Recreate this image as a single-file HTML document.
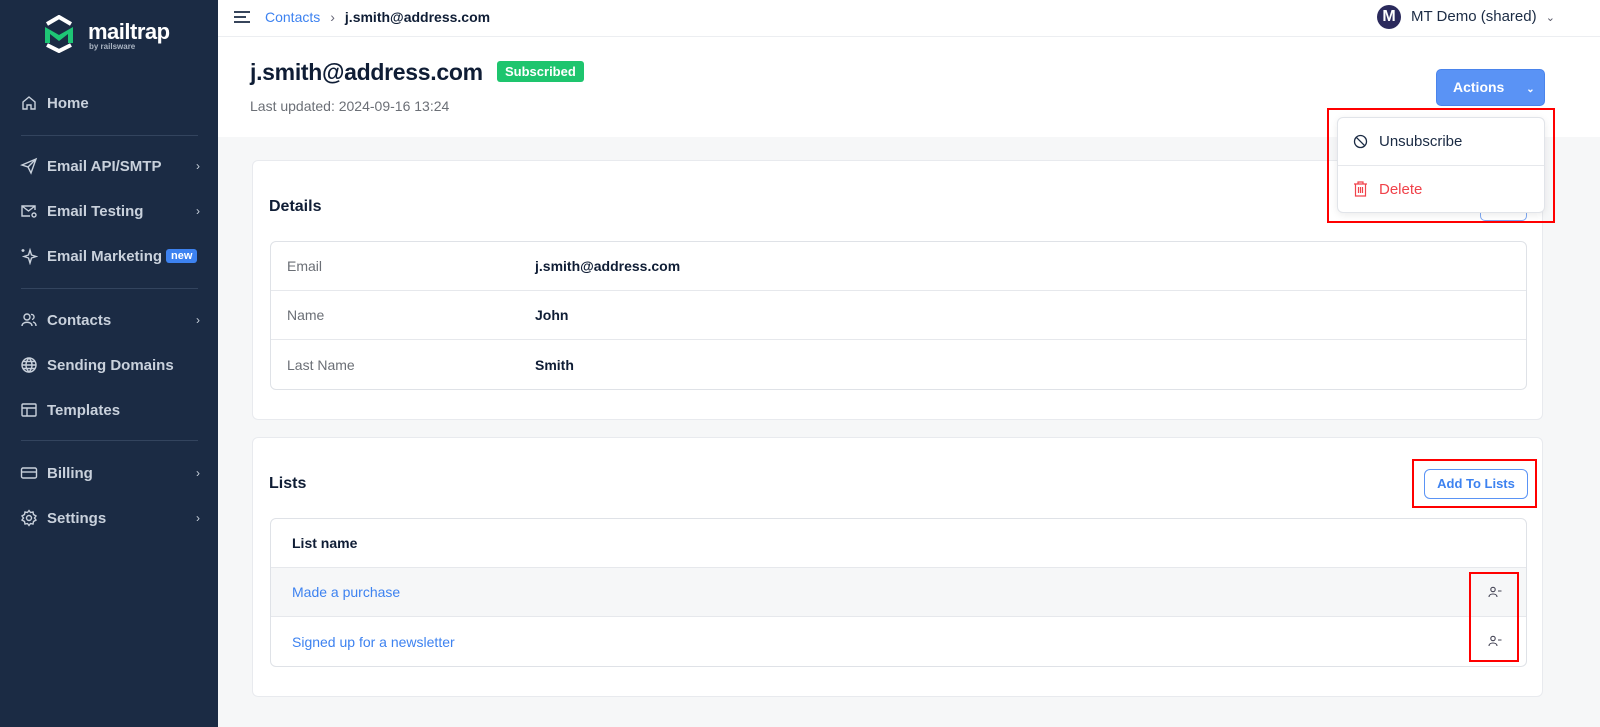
<!DOCTYPE html>
<html><head><meta charset="utf-8"><style>
*{box-sizing:border-box;margin:0;padding:0}
body{width:1600px;height:727px;overflow:hidden;font-family:"Liberation Sans",sans-serif;background:#f6f7f8;position:relative;color:#0f1d35}
.sb{position:absolute;left:0;top:0;width:218px;height:727px;background:#1b2b44}
.nav{position:absolute;left:20px;color:#c9d1dc;font-size:15px;font-weight:bold;display:flex;align-items:center;width:180px}
.nav svg{width:18px;height:18px;margin-right:9px;stroke:#c9d1dc;fill:none;stroke-width:1.4}
.nav .ch{position:absolute;right:0;font-weight:normal;font-size:12px}
.hr{position:absolute;left:21px;width:177px;height:1px;background:#33445e}
.top{position:absolute;left:218px;top:0;right:0;height:37px;background:#fff;border-bottom:1px solid #eceef1}
.head{position:absolute;left:218px;top:37px;right:0;height:100px;background:#fff}
.card{position:absolute;left:252px;width:1291px;background:#fff;border:1px solid #e8eaee;border-radius:6px}
.tbl{position:absolute;left:17px;width:1257px;border:1px solid #dfe2e7;border-radius:6px;overflow:hidden}
.row{height:49px;border-bottom:1px solid #e6e8ec;position:relative;font-size:14px;display:flex;align-items:center}
.row:last-child{border-bottom:none}
.red{position:absolute;border:2px solid #f00}
</style></head><body>
<div class="sb">
 <svg style="position:absolute;left:41px;top:15px" width="36" height="38" viewBox="0 0 36 38"><path d="M6 9 L18 2 L30 9" stroke="#fff" stroke-width="4" fill="none"/><path d="M4 12 L4 28 L9 28 L9 19 L18 26 L27 19 L27 28 L32 28 L32 12 L18 20 Z" fill="#1ec575"/><path d="M6 30 L18 36 L30 30" stroke="#fff" stroke-width="4" fill="none"/></svg>
 <div style="position:absolute;left:88px;top:19px;color:#fff;font-size:22px;font-weight:bold;letter-spacing:-0.5px">mailtrap</div>
 <div style="position:absolute;left:89px;top:42px;color:#aab4c2;font-size:8px;font-weight:bold">by railsware</div>
 <div class="nav" style="top:94px"><svg viewBox="0 0 18 18"><path d="M3 8 L9 3 L15 8 V15 H11 V11 H7 V15 H3 Z"/></svg>Home</div>
 <div class="hr" style="top:135px"></div>
 <div class="nav" style="top:157px"><svg viewBox="0 0 18 18"><path d="M2 8 L16 2 L11 16 L8 10 Z M8 10 L16 2"/></svg>Email API/SMTP<span class="ch">›</span></div>
 <div class="nav" style="top:202px"><svg viewBox="0 0 18 18"><path d="M10 14 H2 V4 H15 V8 M2 4 L8.5 9 L15 4"/><circle cx="14" cy="13" r="2"/></svg>Email Testing<span class="ch">›</span></div>
 <div class="nav" style="top:247px"><svg viewBox="0 0 18 18"><path d="M10 3 L11.5 8 L16 9.5 L11.5 11 L10 16 L8.5 11 L4 9.5 L8.5 8 Z M3 2 V5 M1.5 3.5 H4.5"/></svg>Email Marketing<span style="margin-left:4px;background:#3d82f0;color:#fff;font-size:11px;padding:1px 5px;border-radius:3px">new</span></div>
 <div class="hr" style="top:288px"></div>
 <div class="nav" style="top:311px"><svg viewBox="0 0 18 18"><circle cx="7" cy="6" r="3"/><path d="M2 15 C2 10 12 10 12 15 M11 3.5 A2.5 2.5 0 0 1 12 8.5 M13 11 C15 11.5 16 13 16 15"/></svg>Contacts<span class="ch">›</span></div>
 <div class="nav" style="top:356px"><svg viewBox="0 0 18 18"><circle cx="9" cy="9" r="7"/><path d="M2 9 H16 M9 2 C5 6 5 12 9 16 C13 12 13 6 9 2 M3 5.5 H15 M3 12.5 H15"/></svg>Sending Domains</div>
 <div class="nav" style="top:401px"><svg viewBox="0 0 18 18"><rect x="2" y="3" width="14" height="12" rx="1"/><path d="M2 7 H16 M7 7 V15"/></svg>Templates</div>
 <div class="hr" style="top:440px"></div>
 <div class="nav" style="top:464px"><svg viewBox="0 0 18 18"><rect x="1.5" y="4" width="15" height="10" rx="1.5"/><path d="M1.5 8 H16.5"/></svg>Billing<span class="ch">›</span></div>
 <div class="nav" style="top:509px"><svg viewBox="0 0 18 18"><circle cx="9" cy="9" r="2.5"/><path d="M9 1.5 L10.5 3.5 L13 3 L13.5 5.5 L16 7 L14.5 9 L16 11 L13.5 12.5 L13 15 L10.5 14.5 L9 16.5 L7.5 14.5 L5 15 L4.5 12.5 L2 11 L3.5 9 L2 7 L4.5 5.5 L5 3 L7.5 3.5 Z"/></svg>Settings<span class="ch">›</span></div>
</div>
<div class="top">
 <svg style="position:absolute;left:15px;top:10px" width="18" height="14"><path d="M1 2 H17 M1 7 H13 M1 12 H17" stroke="#1b2b44" stroke-width="1.8"/></svg>
 <div style="position:absolute;left:47px;top:9px;font-size:14px"><span style="color:#3d82f0">Contacts</span><span style="color:#667;margin:0 10px">›</span><b>j.smith@address.com</b></div>
 <div style="position:absolute;left:1159px;top:5px;width:24px;height:24px;border-radius:50%;background:#2b2a5c;color:#fff;font-weight:bold;font-size:16px;text-align:center;line-height:24px">M</div>
 <div style="position:absolute;left:1193px;top:8px;font-size:15px;color:#1b2b44">MT Demo (shared) <span style="font-size:11px;margin-left:5px;color:#556">⌄</span></div>
</div>
<div class="head">
 <div style="position:absolute;left:32px;top:22px;font-size:23px;font-weight:bold;letter-spacing:-0.3px;white-space:nowrap">j.smith@address.com</div>
 <div style="position:absolute;left:279px;top:24px;background:#1ec56e;color:#fff;font-size:13px;font-weight:bold;padding:3px 8px;border-radius:3px">Subscribed</div>
 <div style="position:absolute;left:32px;top:61px;font-size:14px;color:#6b6f76">Last updated: 2024-09-16 13:24</div>
 <div style="position:absolute;left:1218px;top:32px;width:109px;height:37px;background:#5a93f5;border:1px solid #4a84ec;border-radius:5px;color:#fff;font-weight:bold;font-size:14px;line-height:35px;padding-left:16px">Actions <span style="font-size:10px;margin-left:18px">⌄</span></div>
</div>
<div class="card" style="top:160px;height:260px">
 <div style="position:absolute;left:16px;top:37px;font-size:16px;font-weight:bold">Details</div>
 <div style="position:absolute;left:1227px;top:40px;width:47px;height:20px;border:1px solid #7ea8f2;border-radius:5px"></div>
 <div class="tbl" style="top:80px">
  <div class="row"><span style="position:absolute;left:16px;color:#6b6f76">Email</span><b style="position:absolute;left:264px">j.smith@address.com</b></div>
  <div class="row"><span style="position:absolute;left:16px;color:#6b6f76">Name</span><b style="position:absolute;left:264px">John</b></div>
  <div class="row"><span style="position:absolute;left:16px;color:#6b6f76">Last Name</span><b style="position:absolute;left:264px">Smith</b></div>
 </div>
</div>
<div class="card" style="top:437px;height:260px">
 <div style="position:absolute;left:16px;top:37px;font-size:16px;font-weight:bold">Lists</div>
 <div style="position:absolute;left:1171px;top:31px;width:104px;height:30px;border:1px solid #5a93f5;border-radius:6px;color:#3d82f0;font-weight:bold;font-size:13px;text-align:center;line-height:28px">Add To Lists</div>
 <div class="tbl" style="top:80px">
  <div class="row"><b style="position:absolute;left:21px">List name</b></div>
  <div class="row" style="background:#f6f7f8"><span style="position:absolute;left:21px;color:#3d82f0">Made a purchase</span><svg style="position:absolute;left:1217px;top:18px" width="14" height="12" viewBox="0 0 14 12" fill="none" stroke="#445" stroke-width="1.1"><circle cx="5" cy="3.5" r="2.2"/><path d="M1 11 C1 7 9 7 9 11 M10 5 H13.5"/></svg></div>
  <div class="row"><span style="position:absolute;left:21px;color:#3d82f0">Signed up for a newsletter</span><svg style="position:absolute;left:1217px;top:18px" width="14" height="12" viewBox="0 0 14 12" fill="none" stroke="#445" stroke-width="1.1"><circle cx="5" cy="3.5" r="2.2"/><path d="M1 11 C1 7 9 7 9 11 M10 5 H13.5"/></svg></div>
 </div>
</div>
<div style="position:absolute;left:1337px;top:117px;width:208px;height:96px;background:#fff;border:1px solid #e1e4e9;border-radius:6px;box-shadow:0 2px 8px rgba(0,0,0,.08)">
 <div style="height:48px;border-bottom:1px solid #e6e8ec;display:flex;align-items:center;padding-left:15px;font-size:15px;color:#1b2b44"><svg width="15" height="15" viewBox="0 0 15 15" fill="none" stroke="#1b2b44" stroke-width="1.3" style="margin-right:11px"><circle cx="7.5" cy="7.5" r="6"/><path d="M3.3 3.3 L11.7 11.7"/></svg>Unsubscribe</div>
 <div style="height:46px;display:flex;align-items:center;padding-left:15px;font-size:15px;color:#f0424a"><svg width="15" height="16" viewBox="0 0 15 16" fill="none" stroke="#f0424a" stroke-width="1.2" style="margin-right:11px"><path d="M1 3 H14 M5 3 V1 H10 V3 M2.5 3 V15 H12.5 V3 M5.5 6 V12 M7.5 6 V12 M9.5 6 V12"/></svg>Delete</div>
</div>
<div class="red" style="left:1327px;top:108px;width:228px;height:115px"></div>
<div class="red" style="left:1412px;top:459px;width:125px;height:49px"></div>
<div class="red" style="left:1469px;top:572px;width:50px;height:90px"></div>
</body></html>
